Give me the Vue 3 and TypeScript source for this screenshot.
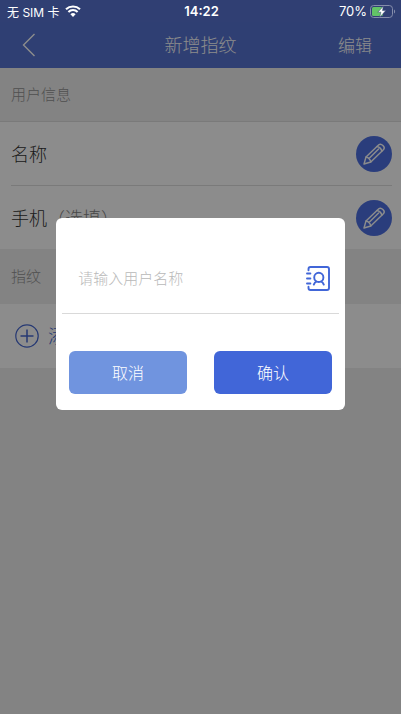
<script setup lang="ts">
import { ref } from 'vue'

const fields = [
  { id: 'name', label: '名称', hint: '' },
  { id: 'phone', label: '手机', hint: '（选填）' },
]
const userName = ref('')
const dialogOpen = ref(true)

function closeDialog(): void {
  dialogOpen.value = false
}
</script>

<template>
  <div class="screen">
    <div class="status">
      <div class="carrier">
        <span>无 SIM 卡</span>
        <svg class="wifi" viewBox="0 0 16 12" aria-hidden="true">
          <path d="M1 4.3a10.2 10.2 0 0 1 14 0M3.4 6.9a6.7 6.7 0 0 1 9.2 0" fill="none" stroke="#fff" stroke-width="2.1" />
          <path d="M8 12 5.4 9.3a3.8 3.8 0 0 1 5.2 0z" fill="#fff" />
        </svg>
      </div>
      <strong class="clock">14:22</strong>
      <div class="power">
        <span>70%</span>
        <svg class="battery" viewBox="0 0 26 13" aria-hidden="true">
          <rect x="0.5" y="0.5" width="22" height="12" rx="3.2" fill="none" stroke="#858dab" />
          <rect x="2" y="2" width="11" height="9" rx="1.6" fill="#62c466" />
          <path d="M24 4.5c1.5.5 1.5 3.5 0 4z" fill="#858dab" />
          <path d="M13.5 1 7.8 7.2h3.1l-1.2 5 6.1-6.6h-3.4z" fill="#fff" stroke="#303f73" stroke-width="0.5" />
        </svg>
      </div>
    </div>

    <header class="nav">
      <button class="back" type="button" aria-label="返回">
        <svg viewBox="0 0 14 24" aria-hidden="true">
          <path d="M12.5 1 1.5 12l11 11" fill="none" stroke="currentColor" stroke-width="1.4" />
        </svg>
      </button>
      <h1 class="text">新增指纹</h1>
      <button class="edit-all text" type="button">编辑</button>
    </header>

    <main>
      <h2 class="section"><span class="text">用户信息</span></h2>
      <ul class="rows">
        <li v-for="field in fields" :key="field.id" class="row">
          <span class="text">{{ field.label }}<span class="hint">{{ field.hint }}</span></span>
          <button class="pencil" type="button" :aria-label="field.label">
            <svg viewBox="0 0 36 36" aria-hidden="true">
              <g fill="none" stroke="#fff" stroke-width="1.4" stroke-linejoin="round" stroke-linecap="round">
                <path d="M8 28 10 21 22.8 8.8c2.4-2 7 2.2 4.8 4.8L14.8 26z" />
                <path d="M10 21c2.2.5 4.2 2.4 4.8 5M21 10.5c2.2.4 4.4 2.6 4.8 4.8M13 22.6 22.6 13" />
              </g>
            </svg>
          </button>
        </li>
      </ul>
      <h2 class="section second"><span class="text">指纹</span></h2>
      <button class="add" type="button">
        <svg viewBox="0 0 24 24" aria-hidden="true">
          <circle cx="12" cy="12" r="11.2" fill="none" stroke="currentColor" stroke-width="1.2" />
          <path d="M12 5.5v13M5.5 12h13" stroke="currentColor" stroke-width="1.5" />
        </svg>
        <span class="text">添加指纹</span>
      </button>
    </main>

    <div v-if="dialogOpen" class="overlay">
      <form class="dialog" role="dialog" aria-modal="true" @submit.prevent="closeDialog">
        <div class="entry">
          <input v-model="userName" type="text" aria-label="用户名称" placeholder="请输入用户名称" />
          <button class="contacts" type="button" aria-label="通讯录">
            <svg viewBox="0 0 26 26" aria-hidden="true">
              <g fill="none" stroke="#4166d8" stroke-width="1.9" stroke-linecap="round">
                <path d="M3.5 5.2V4q0-2 2-2H22q2 0 2 2v19q0 2-2 2H5.5q-2 0-2-2v-1.2" />
                <path d="M2 8.5h3.4M2 13.5h3.4M2 18.5h3.4" />
                <circle cx="13.8" cy="12.4" r="4.6" />
                <path d="M8.8 19.6c.6-1.8 1.4-2.7 2.8-3.2M18.8 19.6c-.6-1.8-1.4-2.7-2.8-3.2" />
              </g>
            </svg>
          </button>
        </div>
        <div class="actions">
          <button class="cancel" type="button" @click="closeDialog">取消</button>
          <button class="confirm" type="submit">确认</button>
        </div>
      </form>
    </div>
  </div>
</template>

<style>
body {
  margin: 0;
  background: #eeeeee;
}
</style>

<style scoped>
.screen {
  min-height: 100vh;
  background: #eeeeee;
  font-family: Inter, "Noto Sans CJK SC", sans-serif;
  font-weight: 300;
}
button {
  padding: 0;
  border: 0;
  background: none;
  font: inherit;
  color: inherit;
  cursor: pointer;
}
svg {
  display: block;
}
.text {
  padding-bottom: 2px;
}
.status {
  position: relative;
  z-index: 2;
  display: grid;
  grid-template-columns: 1fr auto 1fr;
  align-items: center;
  height: 22px;
  padding: 0 5px 0 7px;
  background: #303f73;
  color: #fff;
  font-size: 13px;
  font-weight: 400;
}
.carrier,
.power {
  display: flex;
  align-items: center;
  gap: 5px;
}
.carrier {
  font-size: 12px;
}
.power {
  justify-content: flex-end;
  gap: 3px;
}
.clock {
  font-weight: 600;
}
.wifi {
  width: 16px;
  height: 12px;
}
.battery {
  width: 26px;
  height: 13px;
}
.nav {
  display: grid;
  grid-template-columns: 1fr auto 1fr;
  align-items: center;
  height: 46px;
  background: #5773d1;
  color: #fff;
}
.nav h1 {
  margin: 0;
  font-size: 18px;
  font-weight: 300;
}
.back {
  justify-self: start;
  margin-left: 22px;
}
.back svg {
  width: 14px;
  height: 24px;
}
.edit-all {
  justify-self: end;
  margin-right: 29px;
  font-size: 17px;
}
.section {
  display: flex;
  align-items: center;
  height: 53px;
  margin: 0;
  padding: 0 11px;
  border-bottom: 1px solid #dfdfdf;
  font-size: 15px;
  font-weight: 300;
  color: #929292;
}
.second {
  height: 55px;
  border-bottom: 0;
}
.rows {
  margin: 0;
  padding: 0;
  list-style: none;
  background: #fff;
}
.row {
  display: flex;
  align-items: center;
  justify-content: space-between;
  height: 63px;
  margin: 0 9px 0 11px;
  font-size: 18px;
  color: #333;
}
.row + .row {
  border-top: 1px solid #dfdfdf;
}
.hint {
  color: #858585;
}
.pencil {
  border-radius: 50%;
  background: #4e70e2;
}
.pencil svg {
  width: 36px;
  height: 36px;
}
.add {
  display: flex;
  align-items: center;
  gap: 9px;
  width: 100%;
  height: 64px;
  padding: 0 15px;
  background: #fff;
  color: #4668d2;
  font-size: 18px;
}
.add svg {
  width: 24px;
  height: 24px;
}
.overlay {
  position: fixed;
  inset: 0;
  z-index: 1;
  display: flex;
  align-items: center;
  justify-content: center;
  padding-bottom: 86px;
  background: rgba(0, 0, 0, 0.45);
}
.dialog {
  box-sizing: border-box;
  width: 72%;
  padding: 25px 6px 16px;
  border-radius: 6px;
  background: #fff;
}
.entry {
  display: flex;
  align-items: center;
  height: 70px;
  padding: 0 8px 0 16px;
  border-bottom: 1px solid #d9d9d9;
}
.entry input {
  flex: 1;
  min-width: 0;
  padding: 0;
  border: 0;
  outline: 0;
  background: none;
  font: inherit;
  font-size: 15px;
  color: #333;
}
.entry input::placeholder {
  color: #b9b9b9;
  opacity: 1;
}
.contacts svg {
  width: 26px;
  height: 26px;
}
.actions {
  display: grid;
  grid-template-columns: 1fr 1fr;
  gap: 27px;
  padding: 37px 7px 0;
}
.actions button {
  height: 43px;
  padding-bottom: 2px;
  border-radius: 6px;
  color: #fff;
  font-size: 16px;
}
.actions .cancel {
  background: #7094df;
}
.actions .confirm {
  background: #4166d8;
}
</style>
